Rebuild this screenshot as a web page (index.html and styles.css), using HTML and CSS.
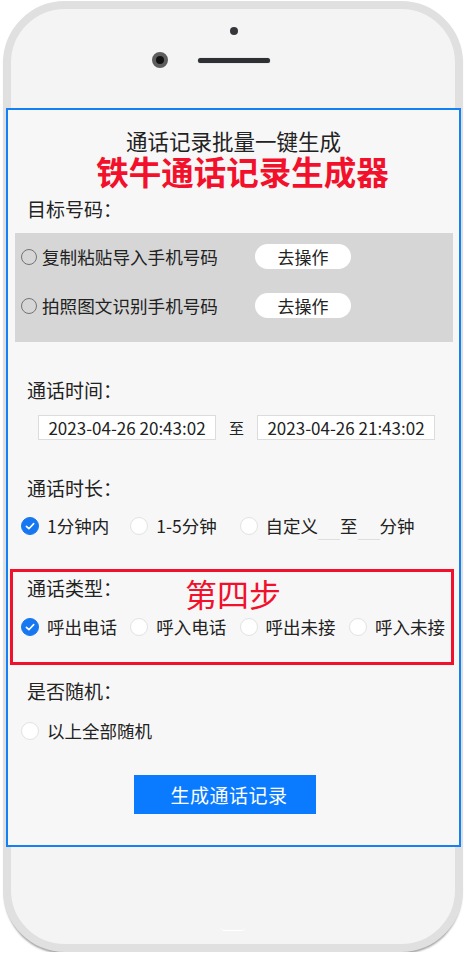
FILE: index.html
```html
<!DOCTYPE html>
<html lang="zh-CN">

<head>
          <meta charset="UTF-8">
          <meta name="viewport" content="width=device-width, initial-scale=1.0">
          <title>铁牛通话记录生成器</title>
          <link rel="stylesheet" href="styles.css">
</head>

<body>
          <div class="phone">
                    <div class="phone-top">
                              <span class="sensor"></span>
                              <div class="top-row">
                                        <span class="camera"></span>
                                        <span class="speaker"></span>
                              </div>
                    </div>

                    <div class="screen">
                              <h1 class="title">通话记录批量一键生成</h1>
                              <h2 class="brand">铁牛通话记录生成器</h2>

                              <div class="label label-target">目标号码：</div>
                              <div class="panel">
                                        <div class="panel-row">
                                                  <label class="pick"><span class="ring"></span>复制粘贴导入手机号码</label>
                                                  <button class="go">去操作</button>
                                        </div>
                                        <div class="panel-row">
                                                  <label class="pick"><span class="ring"></span>拍照图文识别手机号码</label>
                                                  <button class="go">去操作</button>
                                        </div>
                              </div>

                              <div class="label label-gap">通话时间：</div>
                              <div class="dates">
                                        <span class="date">2023-04-26 20:43:02</span>
                                        <span class="to">至</span>
                                        <span class="date">2023-04-26 21:43:02</span>
                              </div>

                              <div class="label label-gap">通话时长：</div>
                              <div class="options">
                                        <label class="opt"><span class="radio checked"><svg viewBox="0 0 18 18" width="18" height="18"><path d="M5.4 9.3 L7.9 11.7 L12.7 6.6" fill="none" stroke="#fff" stroke-width="1.6" stroke-linecap="round" stroke-linejoin="round"/></svg></span>1分钟内</label>
                                        <label class="opt"><span class="radio"></span>1-5分钟</label>
                                        <label class="opt opt-custom"><span class="radio"></span>自定义<span class="blank"></span>至<span class="blank"></span>分钟</label>
                              </div>

                              <div class="step-box">
                                        <div class="step-head">
                                                  <span class="label step-label">通话类型：</span>
                                                  <span class="step-tag">第四步</span>
                                        </div>
                                        <div class="options options-type">
                                                  <label class="opt"><span class="radio checked"><svg viewBox="0 0 18 18" width="18" height="18"><path d="M5.4 9.3 L7.9 11.7 L12.7 6.6" fill="none" stroke="#fff" stroke-width="1.6" stroke-linecap="round" stroke-linejoin="round"/></svg></span>呼出电话</label>
                                                  <label class="opt"><span class="radio"></span>呼入电话</label>
                                                  <label class="opt"><span class="radio"></span>呼出未接</label>
                                                  <label class="opt"><span class="radio"></span>呼入未接</label>
                                        </div>
                              </div>

                              <div class="label label-random">是否随机：</div>
                              <div class="options options-random">
                                        <label class="opt"><span class="radio"></span>以上全部随机</label>
                              </div>

                              <button class="submit">生成通话记录</button>
                    </div>

                    <div class="phone-bottom">
                              <span class="home"></span>
                    </div>
          </div>
</body>

</html>
```

FILE: styles.css
```css
* {
          box-sizing: border-box;
}

body {
          margin: 0;
          background: #ffffff;
          font-family: "Noto Sans CJK SC", "Noto Sans", sans-serif;
          color: #222222;
}

.phone {
          width: 460px;
          height: 951px;
          margin: 1px 0 0 3px;
          border: 8px solid #e0e0e0;
          border-radius: 62px;
          background: #f4f4f4;
          box-shadow: 0 3px 2px -1px rgba(0, 0, 0, 0.35);
          display: flex;
          flex-direction: column;
}

.phone-top {
          height: 99px;
          display: flex;
          flex-direction: column;
}

.sensor {
          width: 8px;
          height: 8px;
          margin: 18px 0 0 219px;
          border-radius: 50%;
          background: #34363a;
}

.top-row {
          display: flex;
          align-items: center;
          margin: 17px 0 0 141px;
}

.camera {
          width: 16px;
          height: 16px;
          border-radius: 50%;
          background: #111;
          border: 4px solid #5d5d5d;
}

.speaker {
          width: 72px;
          height: 5px;
          margin-left: 30px;
          border-radius: 3px;
          background: #2e3033;
          box-shadow: 0 0 1px #888;
}

.screen {
          height: 739px;
          margin: 0 -6px 0 -5px;
          border: 2px solid #1380f5;
          background: #f7f7f7;
          padding-top: 19px;
}

.title {
          margin: 0;
          font-size: 21.5px;
          line-height: 24px;
          font-weight: 400;
          text-align: center;
          color: #222;
}

.brand {
          margin: 0;
          padding-left: 18px;
          font-size: 32.5px;
          line-height: 36px;
          font-weight: 700;
          text-align: center;
          color: #f3102b;
}

.label {
          display: block;
          padding-left: 19px;
          font-size: 19px;
          line-height: 24px;
          color: #222;
}

.label-target {
          margin-top: 8px;
}

.label-gap {
          margin-top: 36px;
}

.panel {
          margin: 12px 6px 0 7px;
          padding: 11px 0 24px 6px;
          background: #d6d6d6;
          display: grid;
          row-gap: 24px;
}

.panel-row {
          display: grid;
          grid-template-columns: 234px 96px;
          align-items: center;
          height: 25px;
}

.pick {
          display: flex;
          align-items: center;
          gap: 5px;
          font-size: 17.6px;
          color: #222;
}

.ring {
          width: 16px;
          height: 16px;
          border-radius: 50%;
          border: 1.5px solid #737373;
}

.go {
          width: 96px;
          height: 25px;
          border: none;
          border-radius: 13px;
          background: #ffffff;
          font-family: inherit;
          font-size: 17px;
          color: #222;
          padding: 0;
}

.dates {
          display: flex;
          align-items: center;
          margin-top: 13px;
          padding-left: 30px;
}

.date {
          width: 178px;
          height: 25px;
          border: 1px solid #dcdcdc;
          background: #ffffff;
          font-size: 17px;
          line-height: 23px;
          text-align: center;
}

.to {
          width: 41px;
          text-align: center;
          font-size: 15px;
}

.options {
          display: grid;
          grid-template-columns: repeat(4, 109.3px);
          align-items: center;
          height: 26px;
          margin-top: 12px;
          padding-left: 13px;
}

.opt {
          display: flex;
          align-items: center;
          gap: 8px;
          font-size: 17.5px;
          line-height: 26px;
          white-space: nowrap;
}

.opt-custom {
          gap: 0;
}

.opt-custom .radio {
          margin-right: 8px;
}

.radio {
          flex: none;
          width: 18px;
          height: 18px;
          border-radius: 50%;
          background: #ffffff;
          border: 1px solid #e2e2e2;
}

.radio.checked {
          background: #1677f0;
          border-color: #1677f0;
}

.radio svg {
          display: block;
          margin: -1px;
}

.blank {
          flex: none;
          width: 22px;
          height: 30px;
          border-bottom: 1px solid #dedede;
          align-self: flex-start;
          margin-top: -2px;
}

.step-box {
          margin: 31px 5px 0 2px;
          border: 3px solid #f1112c;
          padding: 4px 0 22px 8px;
}

.step-head {
          display: flex;
          align-items: flex-start;
}

.step-label {
          padding-left: 6px;
}

.step-tag {
          margin: 0 0 0 63px;
          font-size: 32px;
          line-height: 34px;
          color: #f1112c;
}

.options-type {
          margin-top: 4px;
          padding-left: 0;
}

.label-random {
          margin-top: 14px;
}

.options-random {
          margin-top: 15px;
}

.submit {
          display: block;
          width: 182px;
          height: 39px;
          margin: 31px 0 0 126px;
          border: none;
          background: #0a7bff;
          color: #ffffff;
          font-family: inherit;
          font-size: 19px;
          letter-spacing: 0.5px;
          padding: 0 0 0 8px;
}

.phone-bottom {
          flex: 1;
          display: flex;
          justify-content: center;
}

.home {
          width: 24px;
          height: 4px;
          margin-top: 80px;
          border-radius: 0 0 12px 12px;
          border-bottom: 1px solid #ffffff;
}
```
